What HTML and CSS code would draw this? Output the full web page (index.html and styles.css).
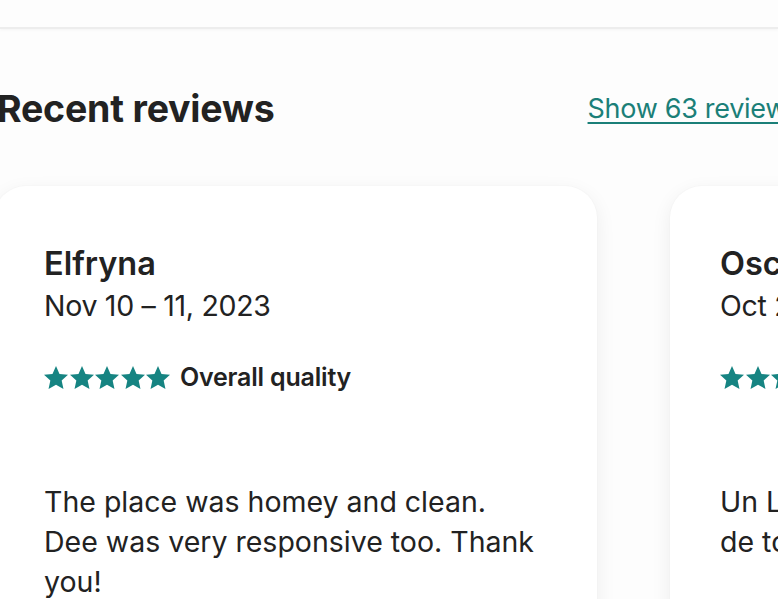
FILE: index.html
```html
<!DOCTYPE html>
<html lang="en">
<head>
<meta charset="utf-8">
<title>Recent reviews</title>
<link rel="stylesheet" href="styles.css">
</head>
<body>
<div class="topbar"></div>
<section class="reviews">
  <div class="head">
    <h2 class="title">Recent reviews</h2>
    <a class="show-all" href="#">Show 63 reviews</a>
  </div>
  <div class="track">
    <article class="card">
      <h3 class="name">Elfryna</h3>
      <p class="date">Nov 10 – 11, 2023</p>
      <div class="rating">
        <span class="stars">
          <svg viewBox="1.4 1.8 21.2 20.2"><path d="M12 1.8l3.1 6.9 7.5.8-5.6 5.1 1.6 7.4L12 18.2 5.4 22l1.6-7.4-5.6-5.1 7.5-.8z"/></svg>
          <svg viewBox="1.4 1.8 21.2 20.2"><path d="M12 1.8l3.1 6.9 7.5.8-5.6 5.1 1.6 7.4L12 18.2 5.4 22l1.6-7.4-5.6-5.1 7.5-.8z"/></svg>
          <svg viewBox="1.4 1.8 21.2 20.2"><path d="M12 1.8l3.1 6.9 7.5.8-5.6 5.1 1.6 7.4L12 18.2 5.4 22l1.6-7.4-5.6-5.1 7.5-.8z"/></svg>
          <svg viewBox="1.4 1.8 21.2 20.2"><path d="M12 1.8l3.1 6.9 7.5.8-5.6 5.1 1.6 7.4L12 18.2 5.4 22l1.6-7.4-5.6-5.1 7.5-.8z"/></svg>
          <svg viewBox="1.4 1.8 21.2 20.2"><path d="M12 1.8l3.1 6.9 7.5.8-5.6 5.1 1.6 7.4L12 18.2 5.4 22l1.6-7.4-5.6-5.1 7.5-.8z"/></svg>
        </span>
        <span class="label">Overall quality</span>
      </div>
      <p class="text">The place was homey and clean. Dee was very responsive too. Thank you!</p>
    </article>
    <article class="card">
      <h3 class="name">Oscar</h3>
      <p class="date">Oct 2 – 4, 2023</p>
      <div class="rating">
        <span class="stars">
          <svg viewBox="1.4 1.8 21.2 20.2"><path d="M12 1.8l3.1 6.9 7.5.8-5.6 5.1 1.6 7.4L12 18.2 5.4 22l1.6-7.4-5.6-5.1 7.5-.8z"/></svg>
          <svg viewBox="1.4 1.8 21.2 20.2"><path d="M12 1.8l3.1 6.9 7.5.8-5.6 5.1 1.6 7.4L12 18.2 5.4 22l1.6-7.4-5.6-5.1 7.5-.8z"/></svg>
          <svg viewBox="1.4 1.8 21.2 20.2"><path d="M12 1.8l3.1 6.9 7.5.8-5.6 5.1 1.6 7.4L12 18.2 5.4 22l1.6-7.4-5.6-5.1 7.5-.8z"/></svg>
          <svg viewBox="1.4 1.8 21.2 20.2"><path d="M12 1.8l3.1 6.9 7.5.8-5.6 5.1 1.6 7.4L12 18.2 5.4 22l1.6-7.4-5.6-5.1 7.5-.8z"/></svg>
          <svg viewBox="1.4 1.8 21.2 20.2"><path d="M12 1.8l3.1 6.9 7.5.8-5.6 5.1 1.6 7.4L12 18.2 5.4 22l1.6-7.4-5.6-5.1 7.5-.8z"/></svg>
        </span>
        <span class="label">Overall quality</span>
      </div>
      <p class="text">Un Lugar muy bonito, en el centro de&nbsp;todo.</p>
    </article>
  </div>
</section>
</body>
</html>
```
FILE: styles.css
```css
html, body {
  margin: 0;
  padding: 0;
  background: #fdfdfd;
  overflow: hidden;
}
body {
  font-family: Inter, "Noto Sans", sans-serif;
  color: #222222;
  width: 778px;
  height: 599px;
}
.topbar {
  height: 27px;
  border-bottom: 2px solid #ededed;
  box-shadow: 0 1px 3px rgba(0,0,0,0.04);
}
.reviews {
  padding-top: 51px;
}
.head {
  display: flex;
  align-items: center;
  height: 56px;
  white-space: nowrap;
}
.title {
  margin: 0 0 0 -3px;
  font-size: 37.5px;
  font-weight: 700;
  letter-spacing: -0.2px;
}
.show-all {
  flex: none;
  margin-left: auto;
  margin-right: -23px;
  font-size: 27px;
  color: #1b7f78;
  text-decoration: underline;
  text-underline-offset: 4px;
  text-decoration-thickness: 2px;
  letter-spacing: -0.3px;
}
.track {
  display: flex;
  gap: 73px;
  margin-top: 50px;
  margin-left: -6px;
}
.card {
  flex: 0 0 603px;
  height: 460px;
  box-sizing: border-box;
  padding: 58px 44px 0 50px;
  background: #ffffff;
  border-radius: 32px;
  box-shadow: 0 6px 20px rgba(0,0,0,0.07), 0 0 2px rgba(0,0,0,0.04);
}
.name {
  margin: 0;
  font-size: 32.5px;
  font-weight: 600;
  line-height: 40px;
  letter-spacing: 0;
}
.date {
  margin: 2px 0 0;
  font-size: 28.5px;
  font-weight: 400;
  line-height: 40px;
  letter-spacing: -0.3px;
  white-space: nowrap;
}
.rating {
  display: flex;
  align-items: center;
  gap: 10px;
  margin-top: 36px;
  white-space: nowrap;
}
.stars {
  display: flex;
  gap: 1.5px;
}
.stars svg {
  width: 24px;
  height: 23px;
  fill: #168482;
}
.label {
  font-size: 25px;
  font-weight: 600;
  letter-spacing: -0.2px;
}
.text {
  max-width: 497px;
  margin: 90px 0 0;
  font-size: 28.5px;
  line-height: 40px;
  letter-spacing: 0;
}
```
